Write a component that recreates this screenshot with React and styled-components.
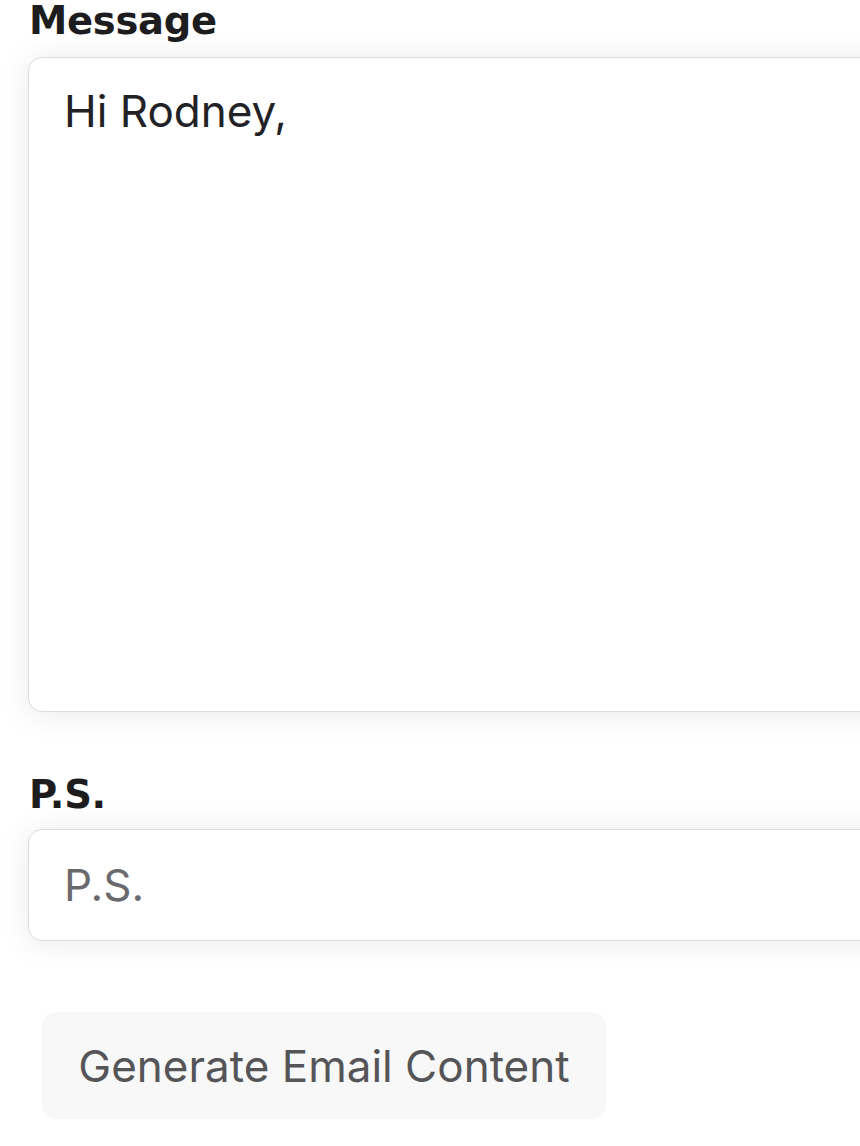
import React, { useState } from 'react';
import styled, { createGlobalStyle } from 'styled-components';

const GlobalStyle = createGlobalStyle`
    html, body {
        margin: 0;
        padding: 0;
        background: #ffffff;
        overflow: hidden;
    }
    body {
        font-family: Inter, "Noto Sans", "Liberation Sans", sans-serif;
        color: #222226;
    }
`;

const Page = styled.div`
    width: 900px;
    padding-top: 2px;
    padding-left: 28px;
    display: flex;
    flex-direction: column;
`;

const Field = styled.div`
    display: flex;
    flex-direction: column;
    gap: ${({ gap }) => gap}px;
    margin-bottom: ${({ spacing }) => spacing}px;
`;

const Label = styled.label`
    font-family: "DejaVu Sans", Inter, sans-serif;
    font-size: 38.5px;
    line-height: 38px;
    font-weight: 700;
    letter-spacing: -0.3px;
    color: #1d1d20;
    padding-left: 1px;
`;

const fieldBox = `
    box-sizing: border-box;
    width: 100%;
    border: 1px solid #dcdcdf;
    border-radius: 14px;
    background: #ffffff;
    box-shadow: 0 2px 32px rgba(0, 0, 0, 0.085);
    font-family: Inter, "Noto Sans", "Liberation Sans", sans-serif;
    font-size: 44px;
    color: #222226;
    outline: none;
    padding-left: 35px;
`;

const MessageArea = styled.textarea`
    ${fieldBox}
    height: 655px;
    padding-top: 23px;
    line-height: 1.4;
    resize: none;
`;

const PsInput = styled.input`
    ${fieldBox}
    height: 112px;

    &::placeholder {
        color: #6a6a6e;
    }
`;

const GenerateButton = styled.button`
    align-self: flex-start;
    margin-left: 14px;
    width: 564px;
    height: 107px;
    border: none;
    border-radius: 14px;
    background: #f8f8f8;
    color: #555558;
    font-family: Inter, "Noto Sans", "Liberation Sans", sans-serif;
    font-size: 44px;
    cursor: pointer;
`;

const App = () => {
  const [message, setMessage] = useState('Hi Rodney,');
  const [ps, setPs] = useState('');

  return (
    <>
      <GlobalStyle />
      <Page>
        <Field gap={17} spacing={64}>
          <Label htmlFor="message">Message</Label>
          <MessageArea
            id="message"
            value={message}
            onChange={(e) => setMessage(e.target.value)}
          />
        </Field>
        <Field gap={15} spacing={71}>
          <Label htmlFor="ps">P.S.</Label>
          <PsInput
            id="ps"
            value={ps}
            placeholder="P.S."
            onChange={(e) => setPs(e.target.value)}
          />
        </Field>
        <GenerateButton type="button">Generate Email Content</GenerateButton>
      </Page>
    </>
  );
};

export default App;
